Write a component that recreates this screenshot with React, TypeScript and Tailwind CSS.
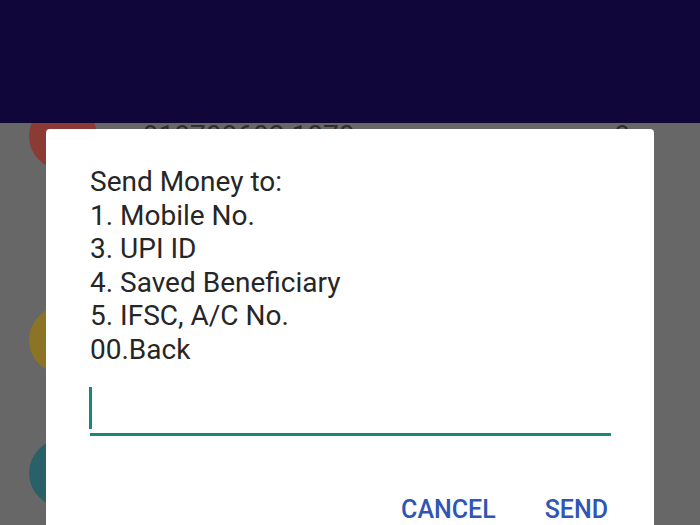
import React from "react";

const lines = [
  "Send Money to:",
  "1. Mobile No.",
  "3. UPI ID",
  "4. Saved Beneficiary",
  "5. IFSC, A/C No.",
  "00.Back",
];

export default function App() {
  return (
    <div
      className="relative w-[700px] h-[525px] overflow-hidden bg-[#676767]"
      style={{ fontFamily: "Roboto, 'Liberation Sans', sans-serif" }}
    >
      {/* dimmed background list */}
      <div className="flex flex-col pt-[102px]">
        <div className="flex items-center h-[68px] pl-[29px] gap-[30px]">
          <div className="w-[68px] h-[68px] rounded-full bg-[#8c3b34]" />
          <div className="flex-1 flex justify-between pr-[70px] text-[28px] text-[#2e2e2e]">
            <span>+918708602 1070</span>
            <span>8</span>
          </div>
        </div>
        <div className="h-[136px]" />
        <div className="flex items-center h-[68px] pl-[29px]">
          <div className="w-[68px] h-[68px] rounded-full bg-[#8b7426]" />
        </div>
        <div className="h-[65px]" />
        <div className="flex items-center h-[68px] pl-[29px]">
          <div className="w-[68px] h-[68px] rounded-full bg-[#2a6068]" />
        </div>
      </div>

      {/* top bar */}
      <div className="absolute left-0 top-0 w-full h-[123px] bg-[#10063a]" />

      {/* dialog */}
      <div className="absolute left-[46px] top-[129px] w-[608px] h-[420px] bg-white rounded-[4px] pl-[44px] pr-[43px] pt-[36px] flex flex-col">
        <div className="text-[28px] leading-[33.6px] text-[#262626]">
          {lines.map((l) => (
            <div key={l}>{l}</div>
          ))}
        </div>
        <div className="mt-[22px] h-[47px] border-b-[3px] border-[#17897c] relative">
          <div className="absolute left-[-1px] top-[-2px] w-[3px] h-[42px] bg-[#17897c]" />
        </div>
        <div className="flex justify-end gap-[49px] mt-[60px] pr-[3px] text-[25px] leading-[28px] font-medium text-[#2f55b5]">
          <span>CANCEL</span>
          <span>SEND</span>
        </div>
      </div>
    </div>
  );
}
